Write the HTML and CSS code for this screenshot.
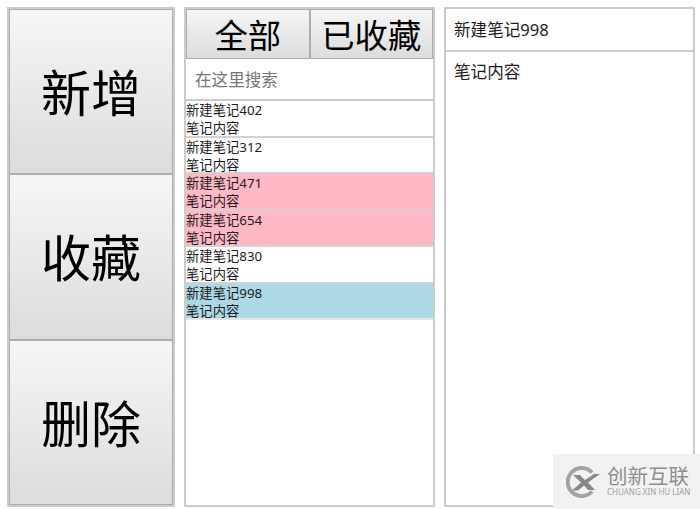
FILE: index.html
```html
<!DOCTYPE html>
<html lang="zh">
<head>
<meta charset="utf-8">
<title>笔记</title>
<link rel="stylesheet" href="styles.css">
</head>
<body>
<div class="app">
  <div class="panel actions">
    <button class="btn big">新增</button>
    <button class="btn big">收藏</button>
    <button class="btn big">删除</button>
  </div>
  <div class="panel list">
    <div class="tabs">
      <button class="btn tab">全部</button>
      <button class="btn tab">已收藏</button>
    </div>
    <div class="search">在这里搜索</div>
    <div class="item"><div>新建笔记402</div><div>笔记内容</div></div>
    <div class="item"><div>新建笔记312</div><div>笔记内容</div></div>
    <div class="item fav"><div>新建笔记471</div><div>笔记内容</div></div>
    <div class="item fav"><div>新建笔记654</div><div>笔记内容</div></div>
    <div class="item"><div>新建笔记830</div><div>笔记内容</div></div>
    <div class="item current"><div>新建笔记998</div><div>笔记内容</div></div>
  </div>
  <div class="panel editor">
    <div class="title">新建笔记998</div>
    <div class="content">笔记内容</div>
  </div>
</div>
<div class="mark">
  <svg class="mark-logo" viewBox="0 0 34 32" width="34" height="32" aria-hidden="true">
    <path d="M26 6.500A14 14 0 1 0 26 25.500" fill="none" stroke="#a3a3a3" stroke-width="4"/>
    <path d="M7 9h7l5 5 9-6h6l-12 8.500 7 7.500h-7l-4-4.500-6 5H6l9-8z" fill="#888"/>
  </svg>
  <div class="mark-text">
    <div class="mark-cn">创新互联</div>
    <div class="mark-en">CHUANG XIN HU LIAN</div>
  </div>
</div>
</body>
</html>
```
FILE: styles.css
```css
* { box-sizing: border-box; }
html, body { margin: 0; padding: 0; background: #fff; }
body {
  width: 700px;
  height: 509px;
  overflow: hidden;
  position: relative;
  font-family: "Noto Sans", "Noto Sans CJK SC", sans-serif;
  color: #1c1c1c;
}
.app {
  display: flex;
  gap: 9px;
  padding: 7px 0 0 7px;
  height: 507px;
}
.panel {
  border: 2px solid #ccc;
  height: 500px;
  display: flex;
  flex-direction: column;
}
.actions { width: 168px; }
.list { width: 251px; }
.editor { width: 251px; }
.btn {
  display: block;
  margin: 0;
  padding: 0;
  border: 1px solid #adadad;
  background: linear-gradient(#f6f6f6, #dcdcdc);
  color: #000;
  font-family: "Noto Sans CJK SC", sans-serif;
}
.big {
  height: 166px;
  padding-bottom: 3px;
  font-size: 50px;
  line-height: 1;
}
.tabs {
  display: flex;
  height: 50px;
  flex: none;
}
.tab {
  flex: 1;
  font-size: 33.33px;
  line-height: 1;
}
.search {
  height: 42px;
  flex: none;
  padding: 0 9px;
  font-size: 16.6px;
  line-height: 41px;
  color: #777;
  border-bottom: 2px solid #ccc;
}
.item {
  height: 36.5px;
  flex: none;
  font-size: 13.33px;
  line-height: 18px;
  border-bottom: 2px solid #d2d2d2;
  white-space: nowrap;
}
.item.fav { background: #ffb8c4; }
.item.current { background: #add8e6; border-bottom-color: #e4e4e4; }
.title {
  height: 43px;
  flex: none;
  padding: 0 8px;
  font-size: 16.6px;
  line-height: 41px;
  border-bottom: 2px solid #ccc;
}
.content {
  padding: 8px;
  font-size: 16.6px;
  line-height: 24px;
}
.mark {
  position: absolute;
  left: 553px;
  top: 454px;
  width: 147px;
  height: 55px;
  background: #f2f2f2;
  display: flex;
  align-items: center;
  gap: 7px;
  padding-left: 13px;
}
.mark-logo { flex: none; }
.mark-text { width: 85px; }
.mark-cn {
  font-size: 20.5px;
  line-height: 20px;
  color: #8e8e8e;
  font-family: "Liberation Sans", "Noto Sans CJK SC", sans-serif;
}
.mark-en {
  margin-top: 1px;
  font-size: 8px;
  line-height: 8px;
  color: #a0a0a0;
  white-space: nowrap;
}
```
